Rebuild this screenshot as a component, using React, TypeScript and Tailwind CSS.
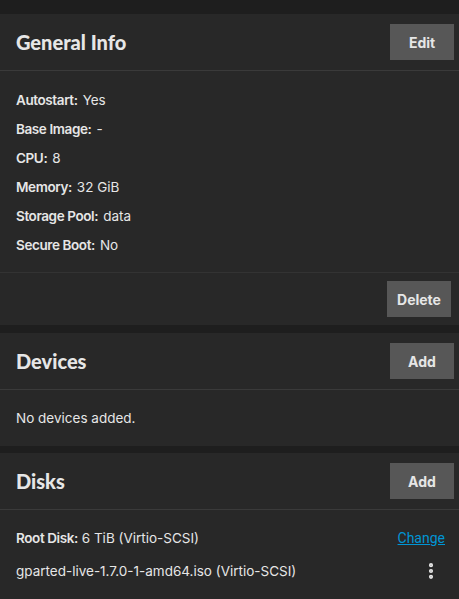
import { EllipsisVertical } from 'lucide-react';

const info = [
  { label: 'Autostart:', value: 'Yes' },
  { label: 'Base Image:', value: '-' },
  { label: 'CPU:', value: '8' },
  { label: 'Memory:', value: '32 GiB' },
  { label: 'Storage Pool:', value: 'data' },
  { label: 'Secure Boot:', value: 'No' },
];

function CardHeader({ title, action }: { title: string; action: string }) {
  return (
    <div className="flex items-center justify-between h-[57px] border-b border-[#3a3a3a] pl-4 pr-[5px]">
      <h2 className="text-[20px] font-black text-[#e6e6e6]" style={{ fontFamily: 'Lato, sans-serif' }}>
        {title}
      </h2>
      <button className="w-16 h-9 bg-[#575757] text-[#e6e6e6] text-[14px] font-bold">{action}</button>
    </div>
  );
}

export default function App() {
  return (
    <div className="min-h-screen bg-[#1e1e1e] pt-[14px] flex flex-col gap-2 text-[#e6e6e6]" style={{ fontFamily: 'Inter, Roboto, sans-serif' }}>
      {/* General Info */}
      <div className="bg-[#282828]">
        <CardHeader title="General Info" action="Edit" />
        <div className="px-4 pt-[20px] pb-[18px] flex flex-col gap-[11px] border-b border-[#333333]">
          {info.map((row) => (
            <div key={row.label} className="h-[18px] flex items-center gap-[5px] text-[13.5px]">
              <span className="font-semibold tracking-[-0.4px]">{row.label}</span>
              <span>{row.value}</span>
            </div>
          ))}
        </div>
        <div className="flex justify-end h-[52px] items-center pr-2">
          <button className="w-16 h-9 bg-[#575757] text-[#e6e6e6] text-[14px] font-bold">Delete</button>
        </div>
      </div>

      {/* Devices */}
      <div className="bg-[#282828]">
        <CardHeader title="Devices" action="Add" />
        <div className="h-[56px] px-4 flex items-center text-[13.5px]">No devices added.</div>
      </div>

      {/* Disks */}
      <div className="bg-[#282828] flex-1 mt-[-1px]">
        <CardHeader title="Disks" action="Add" />
        <div className="px-4 pt-[19px] flex flex-col gap-[15px] text-[13.5px]">
          <div className="h-[18px] flex items-center justify-between">
            <div>
              <span className="font-semibold tracking-[-0.4px]">Root Disk:</span> 6 TiB (Virtio-SCSI)
            </div>
            <a className="text-[#0095d5] underline text-[14px] mr-[-2px]" style={{ fontFamily: 'Roboto, sans-serif' }}>
              Change
            </a>
          </div>
          <div className="h-[18px] flex items-center justify-between">
            <span>gparted-live-1.7.0-1-amd64.iso (Virtio-SCSI)</span>
            <EllipsisVertical className="w-5 h-5 mr-[2px] text-[#e6e6e6]" strokeWidth={3} />
          </div>
        </div>
      </div>
    </div>
  );
}
